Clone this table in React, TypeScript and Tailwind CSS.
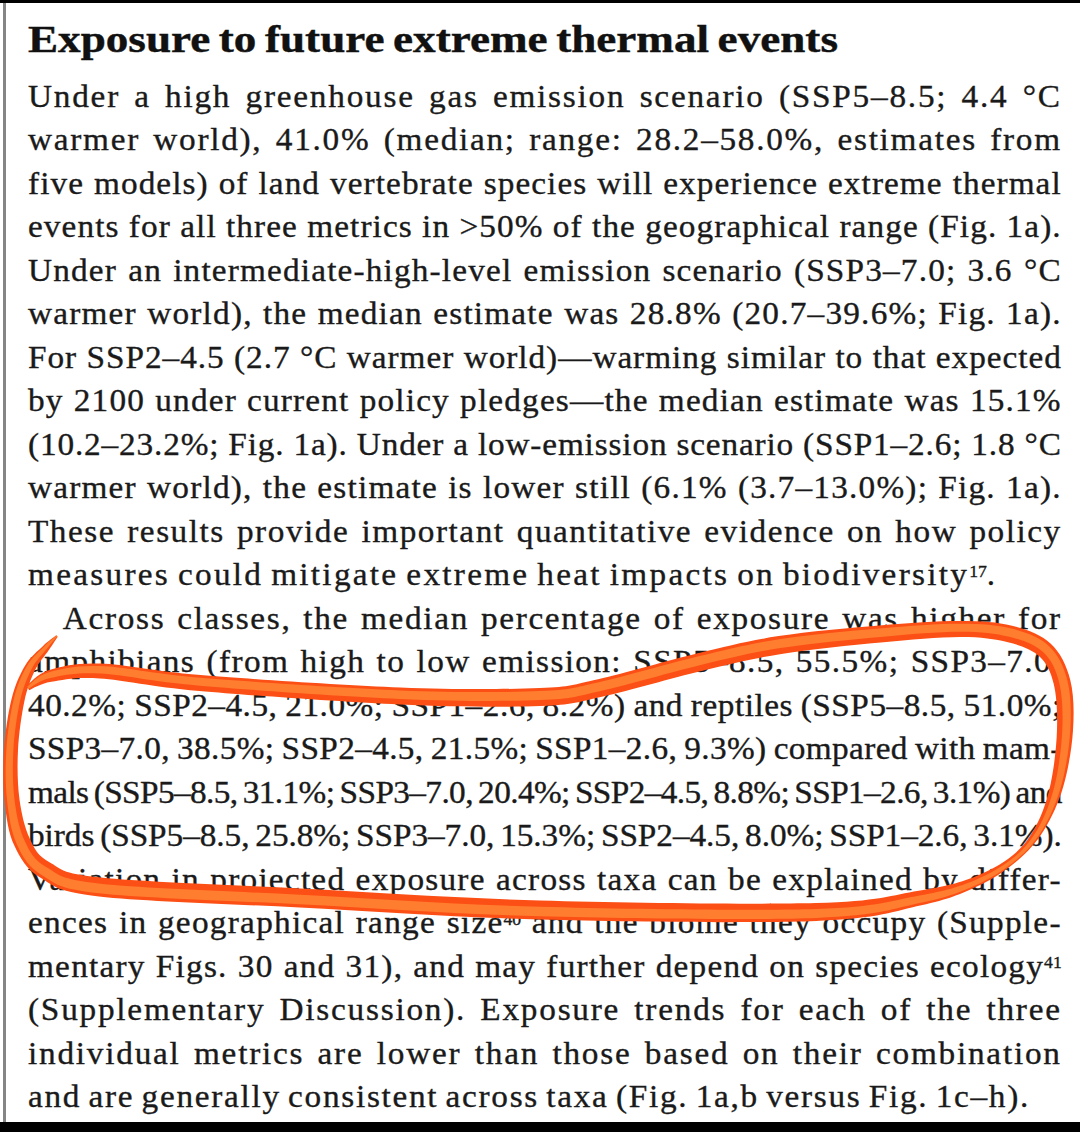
import React, { useLayoutEffect, useRef } from "react"

type Pt = [number, number, number]

// highlighter loop from the scan: x, y, stroke width at that point
const loop: Pt[] = [
  [57, 636, 2], [46, 648, 7], [30, 668, 11], [18, 700, 13], [11, 750, 14],
  [12, 800, 15], [22, 842, 17], [45, 870, 18], [100, 887, 19], [300, 898, 19],
  [540, 910, 19], [816, 912, 18], [920, 898, 15], [975, 882, 10], [1015, 858, 7],
  [1040, 828, 9], [1057, 785, 13], [1065, 730, 16], [1062, 682, 17], [1045, 650, 17],
  [1010, 634, 17], [960, 629, 16], [880, 634, 17], [780, 645, 18], [700, 662, 18],
  [600, 688, 18], [540, 697, 18], [400, 696, 17], [200, 683, 16], [100, 671, 15],
  [50, 676, 12], [28, 688, 5],
]

function curve(pts: [number, number][], move: boolean) {
  let d = move ? `M ${pts[0][0]} ${pts[0][1]}` : ` L ${pts[0][0]} ${pts[0][1]}`
  for (let i = 0; i < pts.length - 1; i++) {
    const p0 = pts[i - 1] || pts[i]
    const p1 = pts[i]
    const p2 = pts[i + 1]
    const p3 = pts[i + 2] || p2
    d += ` C ${p1[0] + (p2[0] - p0[0]) / 6} ${p1[1] + (p2[1] - p0[1]) / 6}, ${p2[0] - (p3[0] - p1[0]) / 6} ${p2[1] - (p3[1] - p1[1]) / 6}, ${p2[0]} ${p2[1]}`
  }
  return d
}

function ribbon(pts: Pt[], k: number, shift = 0) {
  const left: [number, number][] = []
  const right: [number, number][] = []
  pts.forEach((p, i) => {
    const a = pts[Math.max(0, i - 1)]
    const b = pts[Math.min(pts.length - 1, i + 1)]
    const dx = b[0] - a[0]
    const dy = b[1] - a[1]
    const len = Math.hypot(dx, dy) || 1
    const nx = -dy / len
    const ny = dx / len
    const h = (p[2] * k) / 2
    const o = p[2] * shift
    left.push([p[0] + nx * (h + o), p[1] + ny * (h + o)])
    right.push([p[0] - nx * (h - o), p[1] - ny * (h - o)])
  })
  return curve(left, true) + curve(right.reverse(), false) + " Z"
}

const SCALE = 1.04

function Line({
  children,
  last,
  indent,
  target,
}: {
  children: React.ReactNode
  last?: boolean
  indent?: boolean
  target?: number
}) {
  const ref = useRef<HTMLDivElement>(null)
  const span = useRef<HTMLSpanElement>(null)

  // fit each printed line: most of the slack goes to tracking, the rest to word gaps
  useLayoutEffect(() => {
    const el = ref.current
    const s = span.current
    if (!el || !s) return
    el.style.letterSpacing = "0px"
    el.style.textAlign = "left"
    el.style.textAlignLast = "auto"
    el.style.whiteSpace = "nowrap"
    const w = s.getBoundingClientRect().width / SCALE
    el.style.textAlign = ""
    el.style.textAlignLast = ""
    el.style.whiteSpace = ""
    const avail = target ? target / SCALE : el.clientWidth - (indent ? 33.5 : 0)
    const n = (s.textContent || "").length
    const slack = avail - w
    const ls = last ? slack / n : slack > 0 ? Math.min((slack * 0.72) / n, 1.7) : (slack - 2) / n
    el.style.letterSpacing = `${ls}px`
  }, [last, indent, target])

  return (
    <div
      ref={ref}
      className={
        "h-[43.5px] " +
        (last ? "text-left" : "text-justify [text-align-last:justify]") +
        (indent ? " pl-[33.5px]" : "")
      }
    >
      <span ref={span}>{children}</span>
    </div>
  )
}

function Sup({ children }: { children: React.ReactNode }) {
  return <sup className="text-[17px] tracking-normal">{children}</sup>
}

function Heading() {
  const ref = useRef<HTMLSpanElement>(null)
  useLayoutEffect(() => {
    const el = ref.current
    if (!el) return
    el.style.scale = `${810 / el.offsetWidth} 1`
  }, [])
  return (
    <h2 className="mt-[14px] h-[44px] text-[38px] leading-[44px] font-bold text-[#111] [-webkit-text-stroke:0.4px_#111]">
      <span ref={ref} className="inline-block origin-left whitespace-nowrap [word-spacing:-0.06em]">
        Exposure to future extreme thermal events
      </span>
    </h2>
  )
}

export default function App() {
  return (
    <div className="relative w-[1080px] h-[1132px] bg-white flex flex-col overflow-hidden font-['Liberation_Serif',serif] text-[#1a1a1a]">
      <div className="h-[3px] bg-black" />
      <div className="flex-1 flex">
        <div className="w-[3px]" />
        <div className="w-[3px] bg-[#858585]" />
        <div className="flex-1 pl-[22px] pr-[18px]">
          <Heading />
          <div className="mt-[13.5px] w-[994px] origin-left scale-x-[1.04] text-[32px] leading-[43.5px] [word-spacing:-0.08em] [-webkit-text-stroke:0.35px_#1a1a1a]">
            <Line>Under a high greenhouse gas emission scenario (SSP5–8.5; 4.4 °C</Line>
            <Line>warmer world), 41.0% (median; range: 28.2–58.0%, estimates from</Line>
            <Line>five models) of land vertebrate species will experience extreme thermal</Line>
            <Line>events for all three metrics in &gt;50% of the geographical range (Fig. 1a).</Line>
            <Line>Under an intermediate-high-level emission scenario (SSP3–7.0; 3.6 °C</Line>
            <Line>warmer world), the median estimate was 28.8% (20.7–39.6%; Fig. 1a).</Line>
            <Line>For SSP2–4.5 (2.7 °C warmer world)—warming similar to that expected</Line>
            <Line>by 2100 under current policy pledges—the median estimate was 15.1%</Line>
            <Line>(10.2–23.2%; Fig. 1a). Under a low-emission scenario (SSP1–2.6; 1.8 °C</Line>
            <Line>warmer world), the estimate is lower still (6.1% (3.7–13.0%); Fig. 1a).</Line>
            <Line>These results provide important quantitative evidence on how policy</Line>
            <Line last target={974}>
              measures could mitigate extreme heat impacts on biodiversity<Sup>17</Sup>.
            </Line>
            <Line indent>Across classes, the median percentage of exposure was higher for</Line>
            <Line>amphibians (from high to low emission: SSP5–8.5, 55.5%; SSP3–7.0,</Line>
            <Line>40.2%; SSP2–4.5, 21.0%; SSP1–2.6, 8.2%) and reptiles (SSP5–8.5, 51.0%;</Line>
            <Line>SSP3–7.0, 38.5%; SSP2–4.5, 21.5%; SSP1–2.6, 9.3%) compared with mam-</Line>
            <Line>mals (SSP5–8.5, 31.1%; SSP3–7.0, 20.4%; SSP2–4.5, 8.8%; SSP1–2.6, 3.1%) and</Line>
            <Line>birds (SSP5–8.5, 25.8%; SSP3–7.0, 15.3%; SSP2–4.5, 8.0%; SSP1–2.6, 3.1%).</Line>
            <Line>Variation in projected exposure across taxa can be explained by differ-</Line>
            <Line>
              ences in geographical range size<Sup>40</Sup> and the biome they occupy (Supple-
            </Line>
            <Line>
              mentary Figs. 30 and 31), and may further depend on species ecology<Sup>41</Sup>
            </Line>
            <Line>(Supplementary Discussion). Exposure trends for each of the three</Line>
            <Line>individual metrics are lower than those based on their combination</Line>
            <Line last target={1002}>
              and are generally consistent across taxa (Fig. 1a,b versus Fig. 1c–h).
            </Line>
          </div>
        </div>
      </div>
      <div className="h-[10px] bg-black" />

      <svg
        className="absolute inset-0 pointer-events-none"
        width="1080"
        height="1132"
        viewBox="0 0 1080 1132"
      >
        <path d={ribbon(loop, 1)} fill="#fc4f15" />
        <path d={ribbon(loop, 0.5, 0.08)} fill="#ff8534" opacity="0.85" />
      </svg>
    </div>
  )
}
